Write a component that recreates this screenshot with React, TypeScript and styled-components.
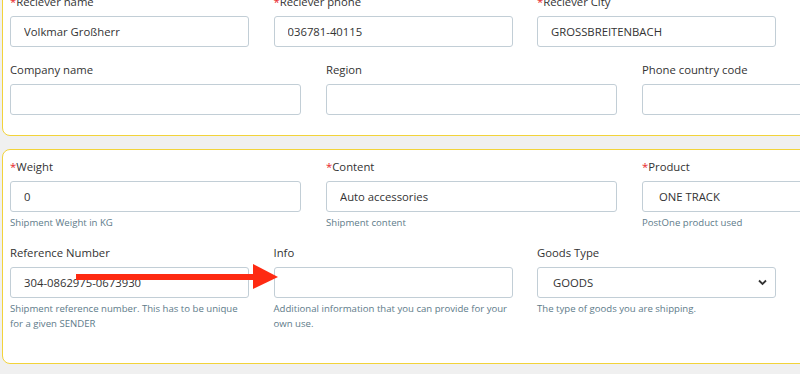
import React from "react";
import styled, { createGlobalStyle } from "styled-components";

const GlobalStyle = createGlobalStyle`
  html, body {
    margin: 0;
    padding: 0;
    background: #f0f0f0;
    overflow: hidden;
  }
  body {
    font-family: "Open Sans", "Liberation Sans", sans-serif;
    color: #333;
  }
`;

const Page = styled.div`
  position: relative;
  margin-top: -16px;
  padding-left: 2px;
  display: flex;
  flex-direction: column;
  gap: 13px;
`;

const Card = styled.div<{ $pb: number }>`
  width: 1100px;
  background: #fff;
  border: 1px solid #f2d33a;
  border-radius: 8px;
  padding: 8px 7px ${(p) => p.$pb}px;
  display: flex;
  flex-direction: column;
  gap: 14px;
`;

const Row = styled.div<{ $col: number; $gap: number }>`
  display: grid;
  grid-template-columns: repeat(4, ${(p) => p.$col}px);
  column-gap: ${(p) => p.$gap}px;
`;

const Field = styled.div`
  display: flex;
  flex-direction: column;
`;

const Label = styled.label`
  font-size: 11.3px;
  line-height: 17px;
  margin-bottom: 6px;
  color: #333;
`;

const Star = styled.span`
  color: #e8262b;
`;

const TextInput = styled.input`
  box-sizing: border-box;
  width: 100%;
  height: 31px;
  border: 1px solid #c2ced6;
  border-radius: 3px;
  padding: 0 13px;
  font-family: "Open Sans", "Liberation Sans", sans-serif;
  font-size: 11.3px;
  color: #333;
  background: #fff;
  outline: none;
`;

const SelectWrap = styled.div`
  position: relative;
`;

const Select = styled.select<{ $pl: number }>`
  box-sizing: border-box;
  width: 100%;
  height: 31px;
  border: 1px solid #c2ced6;
  border-radius: 3px;
  padding: 0 30px 0 ${(p) => p.$pl}px;
  font-family: "Open Sans", "Liberation Sans", sans-serif;
  font-size: 11.3px;
  color: #333;
  background: #fff;
  appearance: none;
  outline: none;
`;

const Chevron = styled.svg`
  position: absolute;
  right: 9px;
  top: 12px;
  pointer-events: none;
`;

const Help = styled.div`
  margin-top: 3px;
  font-size: 9.6px;
  line-height: 15px;
  color: #5e7b8a;
`;

const Arrow = styled.svg`
  position: absolute;
  left: 76px;
  top: 280px;
  pointer-events: none;
`;

type FieldProps = {
  label: string;
  required?: boolean;
  value?: string;
  help?: string;
  select?: boolean;
  pl?: number;
};

const FormField: React.FC<FieldProps> = ({ label, required, value = "", help, select, pl = 15 }) => (
  <Field>
    <Label>
      {required && <Star>*</Star>}
      {label}
    </Label>
    {select ? (
      <SelectWrap>
        <Select $pl={pl} defaultValue={value}>
          <option value={value}>{value}</option>
        </Select>
        <Chevron width="9" height="7" viewBox="0 0 9 7">
          <path d="M1 1.5 L4.5 5 L8 1.5" fill="none" stroke="#333" strokeWidth="1.8" />
        </Chevron>
      </SelectWrap>
    ) : (
      <TextInput defaultValue={value} />
    )}
    {help && <Help>{help}</Help>}
  </Field>
);

const App: React.FC = () => (
  <>
    <GlobalStyle />
    <Page>
      <Card $pb={20}>
        <Row $col={239} $gap={24.5}>
          <FormField label="Reciever name" required value="Volkmar Großherr" />
          <FormField label="Reciever phone" required value="036781-40115" />
          <FormField label="Reciever City" required value="GROSSBREITENBACH" />
        </Row>
        <Row $col={291} $gap={25}>
          <FormField label="Company name" />
          <FormField label="Region" />
          <FormField label="Phone country code" />
        </Row>
      </Card>
      <Card $pb={32}>
        <Row $col={291} $gap={25}>
          <FormField label="Weight" required value="0" help="Shipment Weight in KG" />
          <FormField label="Content" required value="Auto accessories" help="Shipment content" />
          <FormField label="Product" required value="ONE TRACK" help="PostOne product used" select pl={16} />
        </Row>
        <Row $col={239} $gap={24.5}>
          <FormField
            label="Reference Number"
            value="304-0862975-0673930"
            help="Shipment reference number. This has to be unique for a given SENDER"
          />
          <FormField
            label="Info"
            help="Additional information that you can provide for your own use."
          />
          <FormField label="Goods Type" value="GOODS" help="The type of goods you are shipping." select pl={15} />
        </Row>
      </Card>
      <Arrow width="204" height="26" viewBox="0 0 204 26">
        <rect x="0" y="10" width="180" height="6" fill="#fe2a12" />
        <polygon points="177,0 202,13 177,25" fill="#fe2a12" />
      </Arrow>
    </Page>
  </>
);

export default App;
